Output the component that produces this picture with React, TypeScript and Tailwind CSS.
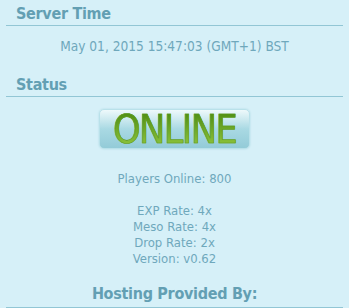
import React from "react";

const font = { fontFamily: '"DejaVu Sans Condensed", "DejaVu Sans", Verdana, sans-serif' };

export default function App() {
  return (
    <div className="w-[349px] h-[308px] bg-[#d6f0f8] text-[#6fa8bc] overflow-hidden" style={font}>
      <div className="px-[6px]">
        <h3 className="pt-[3px] pl-[10px] text-[16px] tracking-[-0.3px] font-bold leading-[22px] text-[#639fb3] border-b border-[#92c6d5]">
          Server Time
        </h3>
        <p className="mt-[12px] text-center text-[13.6px] leading-[16px]">May 01, 2015 15:47:03 (GMT+1) BST</p>
        <h3 className="mt-[20px] pl-[10px] text-[16px] tracking-[-0.3px] font-bold leading-[22px] text-[#639fb3] border-b border-[#92c6d5]">
          Status
        </h3>
        <div className="flex justify-center mt-[12px]">
          <div className="w-[151px] h-[40px] rounded-[5px] border border-[#b9e1ea] bg-gradient-to-b from-[#eef9fb] via-[#a9d9e3] to-[#93cbd8] shadow-[0_0_2px_#a8d6e0] flex items-center justify-center">
            <span
              className="text-[39px] tracking-[-1.5px] leading-none bg-gradient-to-b from-[#4a8a0e] to-[#93c93f] bg-clip-text text-transparent"
              style={{ fontFamily: '"DejaVu Sans Condensed", "DejaVu Sans", sans-serif', WebkitTextStroke: "0.6px #5c9a1c" }}
            >
              ONLINE
            </span>
          </div>
        </div>
        <p className="mt-[22px] text-center text-[13px] leading-[16px]">Players Online: 800</p>
        <div className="mt-[16px] text-center text-[13px] leading-[16px]">
          <p>EXP Rate: 4x</p>
          <p>Meso Rate: 4x</p>
          <p>Drop Rate: 2x</p>
          <p>Version: v0.62</p>
        </div>
        <h3 className="mt-[16px] pb-[2px] text-center text-[16px] tracking-[-0.3px] font-bold leading-[22px] text-[#639fb3] border-b border-[#92c6d5]">
          Hosting Provided By:
        </h3>
      </div>
    </div>
  );
}
